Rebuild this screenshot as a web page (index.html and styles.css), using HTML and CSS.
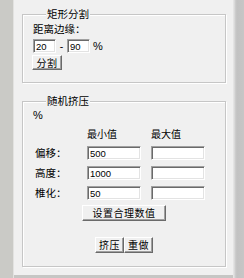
FILE: index.html
```html
<!doctype html>
<html lang="zh">
<head>
<meta charset="utf-8">
<title>矩形分割 · 随机挤压</title>
<link rel="stylesheet" href="styles.css">
</head>
<body>
<div class="win">
  <div class="side-l"></div>
  <div class="main">
    <div class="panel">
      <fieldset class="group g1">
        <legend>矩形分割</legend>
        <div class="lbl">距离边缘：</div>
        <div class="range">
          <input class="box sm" value="20">
          <span class="dash">-</span>
          <input class="box sm" value="90">
          <span class="pct">%</span>
        </div>
        <button class="btn split">分割</button>
      </fieldset>

      <fieldset class="group g2">
        <legend>随机挤压</legend>
        <div class="pct-top">%</div>
        <div class="grid">
          <span></span><span class="hd">最小值</span><span class="hd">最大值</span>
          <label>偏移：</label><input class="box" value="500"><input class="box">
          <label>高度：</label><input class="box" value="1000"><input class="box">
          <label>椎化：</label><input class="box" value="50"><input class="box">
        </div>
        <button class="btn wide">设置合理数值</button>
        <div class="actions">
          <button class="btn act">挤压</button><button class="btn act">重做</button>
        </div>
      </fieldset>
    </div>
    <div class="bottom"></div>
  </div>
  <div class="side-r"></div>
</div>
</body>
</html>
```

FILE: styles.css
```css
*{box-sizing:border-box;margin:0;padding:0}
body{width:244px;height:278px;overflow:hidden;background:#c8c8c4;font:10.5px/14px "Noto Sans CJK SC","Liberation Sans",sans-serif;color:#000}
.win{display:flex;height:278px}
.side-l{width:14px;background:#cacac6;border-right:1px solid #e2e2e0}
.main{width:219px;display:flex;flex-direction:column}
.panel{height:275px;background:#f0f0f0;padding:8px 7px 0 8px}
.bottom{flex:1;background:#c6c6c4}
.side-r{width:11px;background:linear-gradient(90deg,#e4e4e4 0,#e4e4e4 1px,#cfcfcf 2px,#c2c2c2 4px,#c6c6c6)}

.group{border:1px solid #c6c6c6;box-shadow:inset 1px 1px #fff,1px 1px #fff;padding:0 0 0 10px;min-width:0}
.group legend{margin-left:13px;padding:0 1px;line-height:12px;height:12px;font-size:10.5px;background:#f0f0f0}
.g1{height:75px}
.g2{margin-top:12px;height:172px}

.lbl{margin-top:2px}
.range{display:flex;align-items:center;margin-top:3px;height:14px}
.dash{width:11px;text-align:center;font-family:"Liberation Sans",sans-serif}
.pct{margin-left:3px;font:11px "Liberation Sans",sans-serif}

.box{display:block;height:14px;width:54px;background:#fff;font:9.5px "Liberation Sans",sans-serif;color:#000;padding:1px 0 0 2px;
  border:1px solid;border-color:#a0a0a0 #fff #fff #a0a0a0;box-shadow:inset 1px 1px #6a6a6a,inset -1px -1px #e3e3e3;outline:none}
.box.sm{width:23px}

.btn{display:block;background:#f0f0f0;font:10px/1 "Noto Sans CJK SC",sans-serif;color:#000;letter-spacing:.5px;
  border:1px solid;border-color:#fff #6a6a6a #6a6a6a #fff;box-shadow:inset -1px -1px #a0a0a0}
.split{margin:2px 0 0 -1px;width:30px;height:15px}

.pct-top{margin-top:1px;font:11px/14px "Liberation Sans",sans-serif}
.grid{display:grid;grid-template-columns:54px 64px 54px;row-gap:6px;margin-top:5px}
.grid .hd{line-height:14px;margin-bottom:-1px;font-size:10px}
.grid label{padding-left:2px;line-height:14px}
.grid .hd:nth-child(2){grid-column:2}
.wide{margin:5px 0 0 49px;width:84px;height:16px}
.actions{display:flex;margin:16px 0 0 62px}
.act{width:29px;height:16px}
```
